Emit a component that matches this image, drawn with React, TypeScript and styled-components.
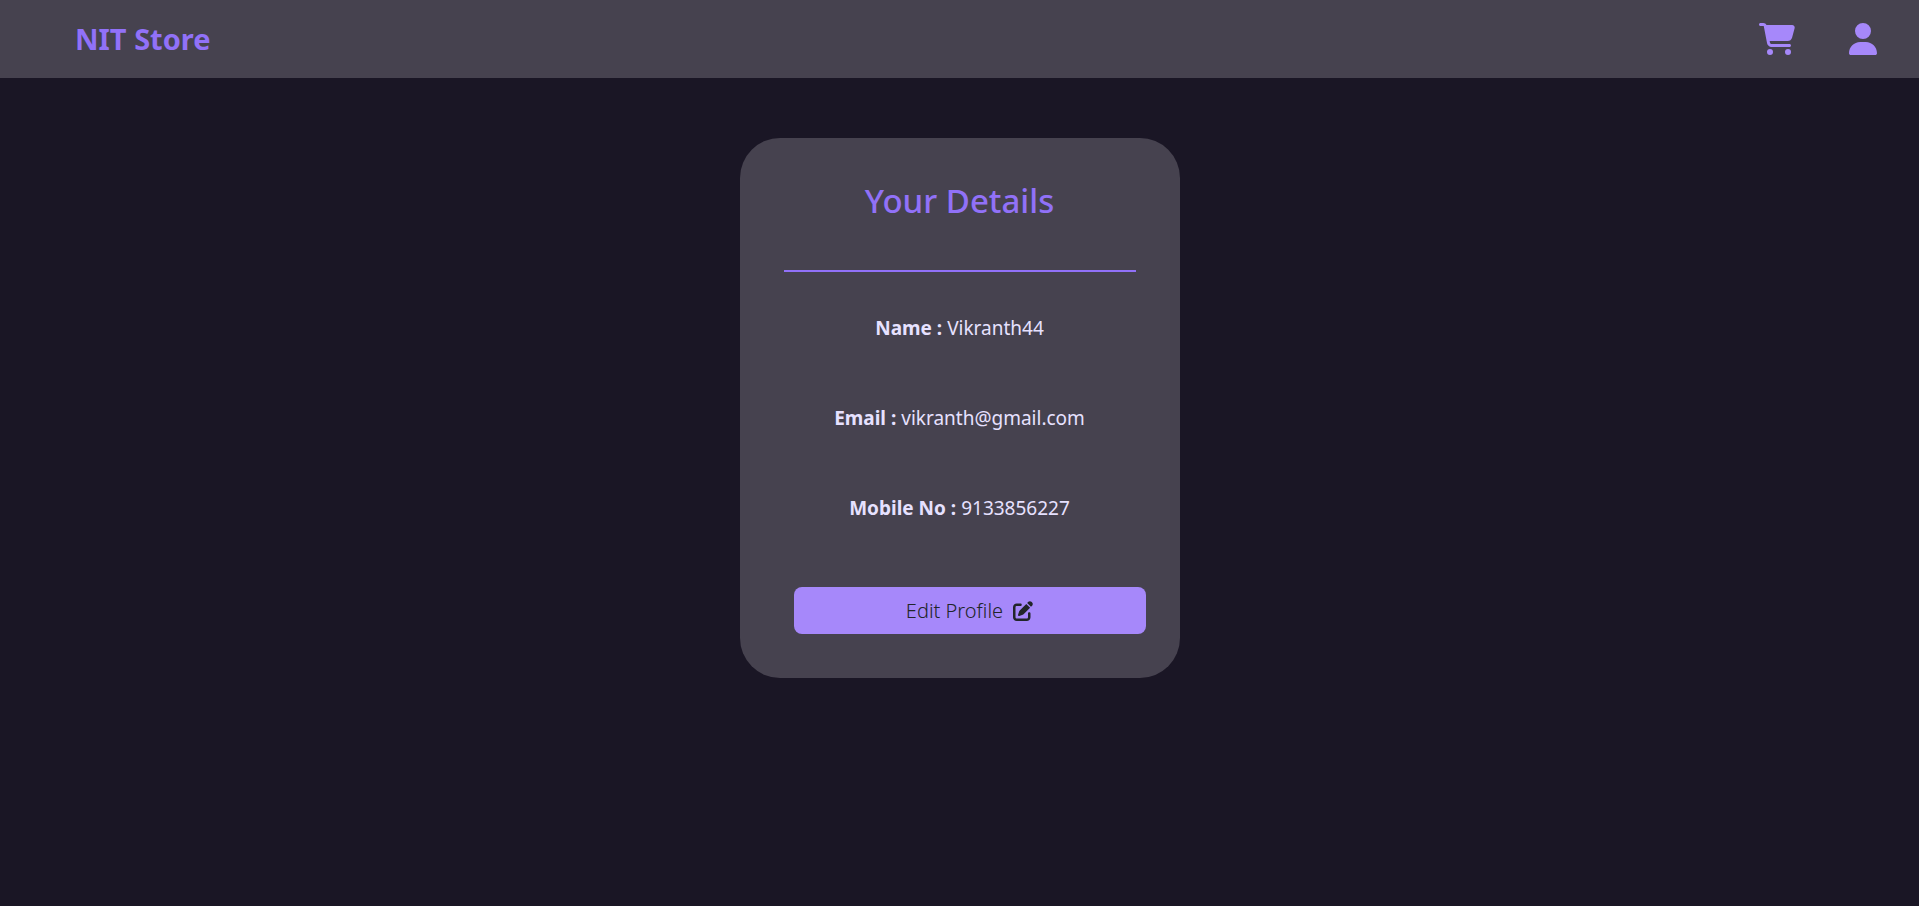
import React from 'react';
import styled, { createGlobalStyle } from 'styled-components';
import { FaCartShopping, FaPenToSquare, FaUser } from 'react-icons/fa6';

const GlobalStyle = createGlobalStyle`
  *, *::before, *::after { box-sizing: border-box; }
  body {
    margin: 0;
    background: #1a1625;
    color: #e6e1ff;
    font-family: "Noto Sans", "Open Sans", sans-serif;
    font-size: 19px;
    line-height: 30px;
  }
`;

const Navbar = styled.header`
  display: flex;
  align-items: center;
  justify-content: space-between;
  height: 78px;
  padding: 0 40px 0 75px;
  background: #46424f;
`;

const Brand = styled.a`
  color: #9171f8;
  font-size: 29px;
  font-weight: 700;
  line-height: 42px;
  text-decoration: none;
`;

const NavLinks = styled.nav`
  display: flex;
  align-items: center;
  gap: 52px;
`;

const NavLink = styled.a<{ $size: number }>`
  display: flex;
  color: #a688fa;
  font-size: ${({ $size }) => $size}px;
`;

const Card = styled.main`
  display: flex;
  flex-direction: column;
  width: 440px;
  max-width: 100%;
  margin: 60px auto 0;
  padding: 44px;
  border-radius: 40px;
  background: #46424f;
  text-align: center;
`;

const Title = styled.h1`
  margin: 0;
  color: #9171f8;
  font-size: 33px;
  font-weight: 500;
  line-height: 38px;
`;

const Divider = styled.hr`
  width: 100%;
  margin: 50px 0 41px;
  border: 0;
  border-top: 2px solid #9171f8;
`;

const Details = styled.div`
  display: flex;
  flex-direction: column;
  gap: 60px;
`;

const Detail = styled.p`
  margin: 0;
`;

const EditButton = styled.button`
  display: flex;
  align-items: center;
  justify-content: center;
  gap: 10px;
  width: 100%;
  height: 47px;
  margin: 64px 0 0 10px;
  border: 0;
  border-radius: 8px;
  background: #a688fa;
  color: #212529;
  font: inherit;
  font-size: 20px;
  font-weight: 300;
  cursor: pointer;
`;

export default function App() {
  return (
    <>
      <GlobalStyle />
      <Navbar>
        <Brand href="#">NIT Store</Brand>
        <NavLinks>
          <NavLink href="#cart" aria-label="Cart" $size={36}><FaCartShopping /></NavLink>
          <NavLink href="#profile" aria-label="Profile" $size={32}><FaUser /></NavLink>
        </NavLinks>
      </Navbar>
      <Card>
        <Title>Your Details</Title>
        <Divider />
        <Details>
          <Detail><b>Name :</b> Vikranth44</Detail>
          <Detail><b>Email :</b> vikranth@gmail.com</Detail>
          <Detail><b>Mobile No :</b> 9133856227</Detail>
        </Details>
        <EditButton type="button">Edit Profile <FaPenToSquare /></EditButton>
      </Card>
    </>
  );
}
